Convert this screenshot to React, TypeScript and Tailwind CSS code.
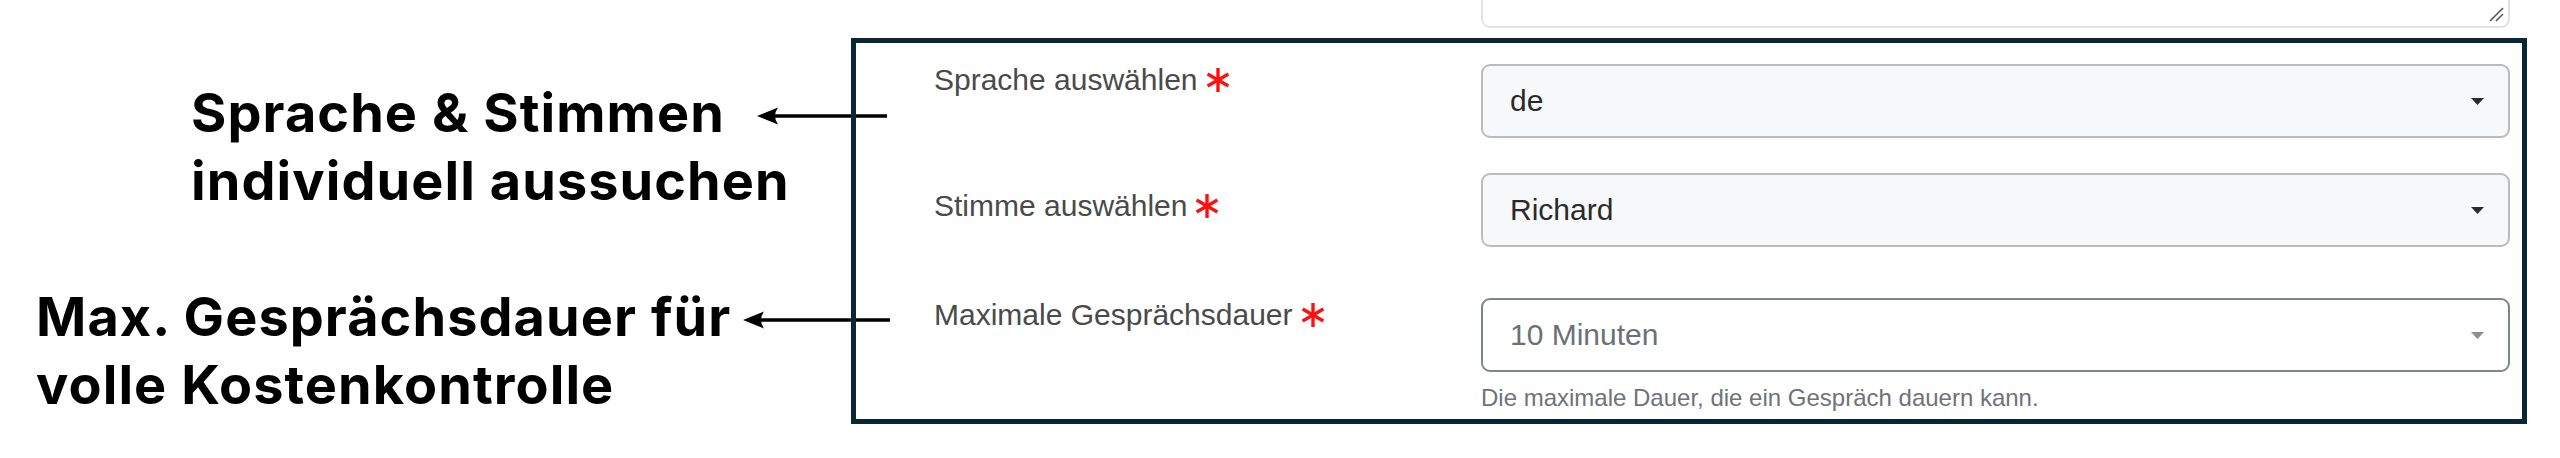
import React from "react";

const Asterisk = () => (
	<svg width="24" height="26" viewBox="0 0 24 26" className="shrink-0">
		<g stroke="#ff1010" strokeWidth="3.4" strokeLinecap="butt">
			<line x1="12" y1="1" x2="12" y2="25" />
			<line x1="1.6" y1="7" x2="22.4" y2="19" />
			<line x1="1.6" y1="19" x2="22.4" y2="7" />
		</g>
	</svg>
);

const Caret = ({ muted }: { muted?: boolean }) => (
	<svg width="13" height="7" viewBox="0 0 13 7" className="shrink-0">
		<path d="M0 0 H13 L6.5 7 Z" fill={muted ? "#8a8f95" : "#2b2b2b"} />
	</svg>
);

const Arrow = ({ width }: { width: number }) => (
	<svg width={width} height="22" viewBox={`0 0 ${width} 22`} className="shrink-0">
		<line x1="14" y1="11" x2={width} y2="11" stroke="#000" strokeWidth="3.6" />
		<path d="M0 11 L21 2.5 Q15 11 21 19.5 Z" fill="#000" />
	</svg>
);

type RowProps = {
	label: string;
	value: string;
	labelOffset: string;
	rowClass: string;
	muted?: boolean;
};

const SelectRow = ({ label, value, labelOffset, rowClass, muted }: RowProps) => (
	<div className={`flex items-start ${rowClass}`}>
		<div className={`w-[547px] shrink-0 flex items-center h-[36px] gap-[8px] ${labelOffset}`}>
			<span className="text-[30px] leading-[36px] text-[#4a4a4a]">{label}</span>
			<Asterisk />
		</div>
		{/* select */}
		<div
			className={`w-[1029px] h-[74px] rounded-[9px] border-2 flex items-center justify-between pl-[27px] pr-[24px] ${
				muted ? "bg-white border-[#7f858c]" : "bg-[#f7f8fa] border-[#bcbcbc]"
			}`}
		>
			<span className={`text-[30px] leading-[36px] ${muted ? "text-[#6c7075]" : "text-[#2a2a2a]"}`}>{value}</span>
			<Caret muted={muted} />
		</div>
	</div>
);

export default function App() {
	return (
		<main
			className="w-[2560px] h-[458px] bg-white overflow-hidden flex"
			style={{ fontFamily: '"Liberation Sans", Arial, sans-serif' }}
		>
			{/* Annotationen links */}
			<div
				className="w-[851px] shrink-0 pt-[79px] text-black font-bold text-[54px] leading-[68px] tracking-[0.02em]"
				style={{ fontFamily: "Inter, sans-serif" }}
			>
				<div>
					<div className="flex items-center">
						<span className="pl-[191px] whitespace-nowrap">Sprache &amp; Stimmen</span>
						<div className="ml-auto -mr-[36px] flex items-center pt-[6px]">
							<Arrow width={130} />
						</div>
					</div>
					<div className="pl-[191px] whitespace-nowrap">individuell aussuchen</div>
				</div>
				<div className="mt-[68px]">
					<div className="flex items-center">
						<span className="pl-[36px] whitespace-nowrap">Max. Gesprächsdauer für</span>
						<div className="ml-auto -mr-[39px] flex items-center pt-[6px]">
							<Arrow width={147} />
						</div>
					</div>
					<div className="pl-[36px] whitespace-nowrap">volle Kostenkontrolle</div>
				</div>
			</div>

			{/* Formular */}
			<div className="flex flex-col">
				<div className="h-[38px] pl-[630px]">
					<div className="-mt-[20px] h-[48px] w-[1029px] rounded-[9px] border-2 border-[#dfe3e8] bg-white flex items-end justify-end pr-[3px] pb-[3px]">
						<svg width="17" height="17" viewBox="0 0 17 17">
							<g stroke="#555" strokeWidth="1.6">
								<line x1="2" y1="15" x2="15" y2="2" />
								<line x1="8" y1="15" x2="15" y2="8" />
							</g>
						</svg>
					</div>
				</div>
				<div className="relative w-[1676px] h-[386px] border-[5px] border-[#0b2735] pl-[78px] pt-[21px]">
					<SelectRow label="Sprache auswählen" value="de" labelOffset="-mt-[2px]" rowClass="" />
					<SelectRow label="Stimme auswählen" value="Richard" labelOffset="mt-[15px]" rowClass="mt-[35px]" />
					<SelectRow
						label="Maximale Gesprächsdauer"
						value="10 Minuten"
						labelOffset="-mt-[1px]"
						rowClass="mt-[51px]"
						muted
					/>
					<p className="pl-[547px] mt-[11px] text-[24px] leading-[30px] text-[#6f7378]">
						Die maximale Dauer, die ein Gespräch dauern kann.
					</p>
				</div>
			</div>
		</main>
	);
}
